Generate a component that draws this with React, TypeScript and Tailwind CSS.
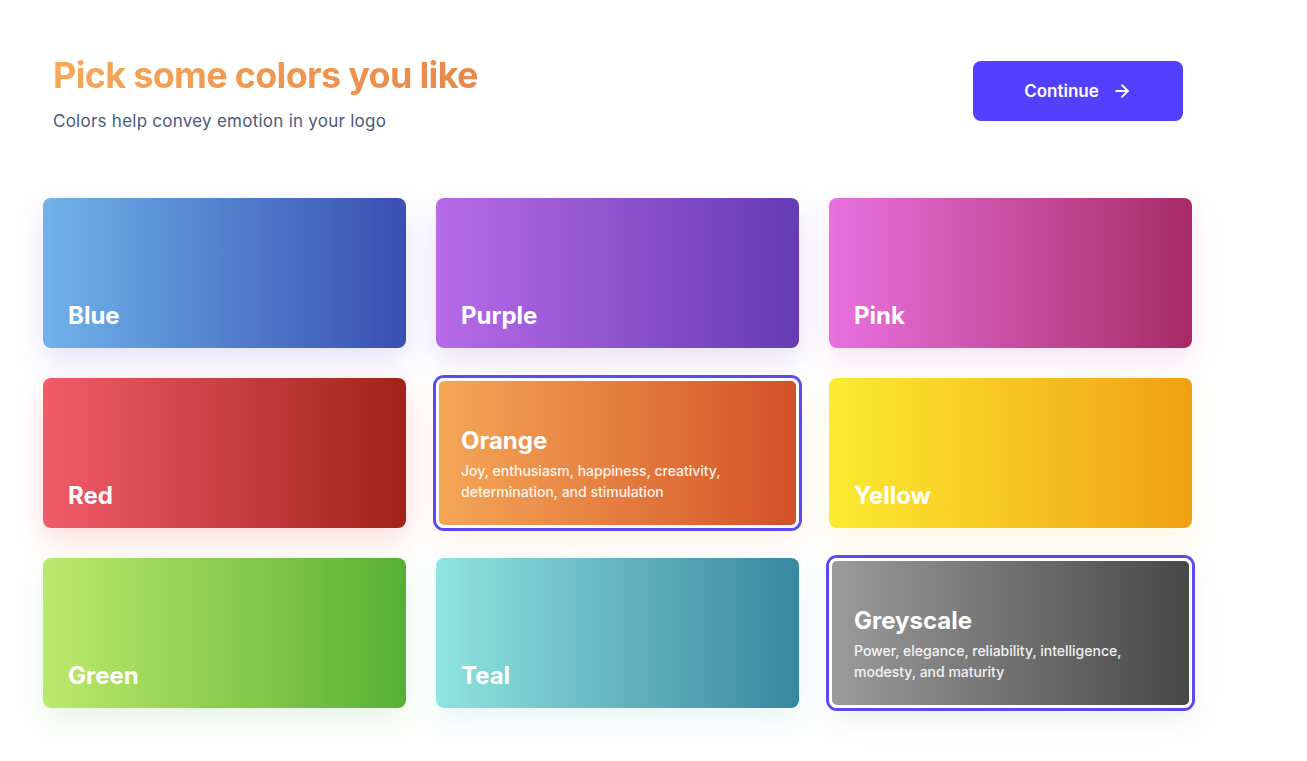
import React from 'react'
import { ArrowRight } from 'lucide-react'

type Swatch = {
  name: string
  bg: string
  glow: string
  desc?: string
}

// 卡片数据：渐变与阴影色都写全类名
const swatches: Swatch[] = [
  { name: 'Blue', bg: 'from-[#70b2e9] to-[#3b4fb2]', glow: 'shadow-[0_12px_30px_rgba(90,80,220,0.16)]' },
  { name: 'Purple', bg: 'from-[#b86ae8] to-[#663bb3]', glow: 'shadow-[0_12px_30px_rgba(110,70,200,0.16)]' },
  { name: 'Pink', bg: 'from-[#e870e0] to-[#a82a66]', glow: 'shadow-[0_12px_30px_rgba(220,80,170,0.16)]' },
  { name: 'Red', bg: 'from-[#f25b69] to-[#a12317]', glow: 'shadow-[0_12px_30px_rgba(240,80,80,0.2)]' },
  {
    name: 'Orange',
    bg: 'from-[#f4a757] to-[#d24f27]',
    glow: 'shadow-[0_12px_30px_rgba(240,140,70,0.14)]',
    desc: 'Joy, enthusiasm, happiness, creativity, determination, and stimulation',
  },
  { name: 'Yellow', bg: 'from-[#fbeb30] to-[#efa012]', glow: 'shadow-[0_12px_30px_rgba(240,200,60,0.16)]' },
  { name: 'Green', bg: 'from-[#bde96b] to-[#55b034]', glow: 'shadow-[0_12px_30px_rgba(100,200,80,0.16)]' },
  { name: 'Teal', bg: 'from-[#8fe5e0] to-[#36889f]', glow: 'shadow-[0_12px_30px_rgba(80,190,200,0.14)]' },
  {
    name: 'Greyscale',
    bg: 'from-[#9c9c9c] to-[#484848]',
    glow: 'shadow-[0_12px_30px_rgba(120,120,120,0.12)]',
    desc: 'Power, elegance, reliability, intelligence, modesty, and maturity',
  },
]

const ColorCard = ({ s }: { s: Swatch }) => {
  const selected = !!s.desc
  return (
    <div
      className={`h-[150px] rounded-lg border-[3px] bg-origin-border bg-linear-to-r ${s.bg} ${s.glow} flex flex-col justify-end px-[22px] ${
        selected
          ? 'border-white ring-[3px] ring-[#5b48f6] pb-[23px]'
          : 'border-transparent pb-[14px]'
      }`}
    >
      <div className="text-[24px] leading-[30px] font-bold text-white">{s.name}</div>
      {s.desc && (
        <p className="mt-[4px] w-[285px] text-[14px] leading-[21px] font-medium text-white/90">{s.desc}</p>
      )}
    </div>
  )
}

export default function App() {
  return (
    <div className="min-h-screen bg-white font-['Inter','Liberation_Sans',sans-serif]">
      <div className="w-[1149px] ml-[43px] pt-[53px]">
        <div className="flex items-start justify-between px-[10px] pr-[9px]">
          <div>
            <h1 className="inline-block text-[36px] leading-[44px] font-bold tracking-[-0.7px] bg-linear-to-r from-[#f6a757] to-[#e8884b] bg-clip-text text-transparent">
              Pick some colors you like
            </h1>
            <p className="mt-[12px] text-[17px] leading-[24px] tracking-[0.25px] text-[#4b5a7b]">
              Colors help convey emotion in your logo
            </p>
          </div>
          <button className="mt-[8px] w-[210px] h-[60px] rounded-lg bg-[#5340ff] text-white text-[17px] font-semibold flex items-center justify-center gap-[13px]">
            <span className="pt-[2px]">Continue</span>
            <ArrowRight className="w-[20px] h-[20px]" strokeWidth={2.2} />
          </button>
        </div>

        <div className="mt-[65px] grid grid-cols-3 gap-[30px]">
          {swatches.map((s) => (
            <ColorCard key={s.name} s={s} />
          ))}
        </div>
      </div>
    </div>
  )
}
